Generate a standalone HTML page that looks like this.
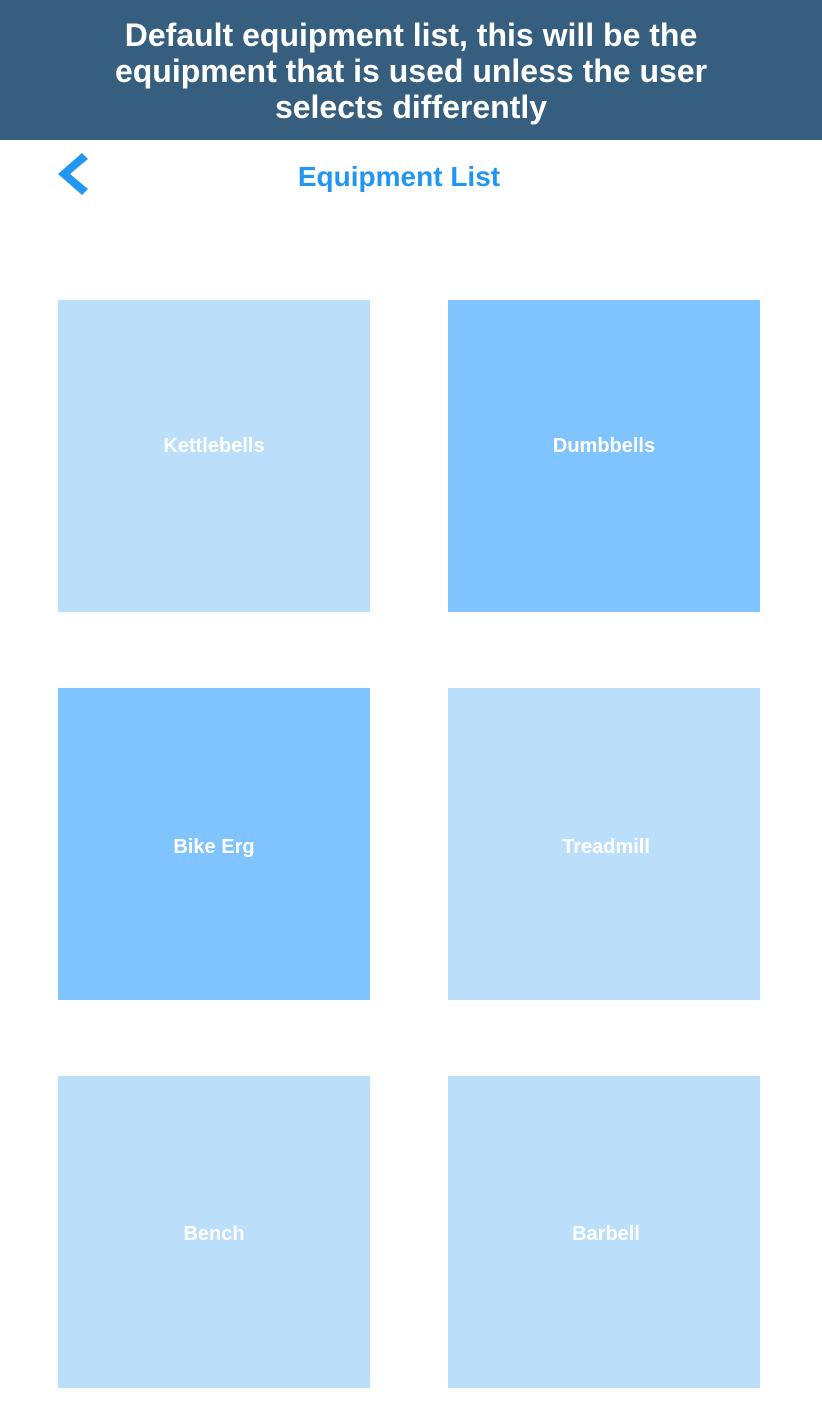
<!DOCTYPE html>
<html><head><meta charset="utf-8"><style>
body{margin:0;width:822px;height:1424px;background:#fff;font-family:"Liberation Sans",sans-serif;position:relative;overflow:hidden}
.hdr{position:absolute;left:0;top:0;width:822px;height:140px;background:#365e7f;color:#fff;font-weight:bold;font-size:32px;line-height:36px;text-align:center;box-sizing:border-box;padding-top:17px}
.title{position:absolute;left:0;width:798px;top:161px;text-align:center;color:#2196f3;font-weight:bold;font-size:28px}
.b{position:absolute;width:312px;height:312px;background:#bbdefb;color:#fff;font-weight:bold;font-size:20px;display:flex;align-items:center;justify-content:center;box-sizing:border-box;padding-bottom:20px}
.d{background:#80c4ff}
</style></head><body>
<div class="hdr">Default equipment list, this will be the<br>equipment that is used unless the user<br>selects differently</div>
<svg style="position:absolute;left:0;top:0" width="120" height="220"><polygon points="82,153 88,159 70,174 88,189 82,195 58,174" fill="#2196f3"/></svg>
<div class="title">Equipment List</div>
<div class="b" style="left:58px;top:300px">Kettlebells</div>
<div class="b d" style="left:448px;top:300px">Dumbbells</div>
<div class="b d" style="left:58px;top:688px;padding-bottom:0;padding-top:7px">Bike Erg</div>
<div class="b" style="left:448px;top:688px;padding-bottom:0;padding-top:7px;padding-left:4px">Treadmill</div>
<div class="b" style="left:58px;top:1076px;padding-bottom:0;padding-top:4px">Bench</div>
<div class="b" style="left:448px;top:1076px;padding-bottom:0;padding-top:4px;padding-left:4px">Barbell</div>
</body></html>
